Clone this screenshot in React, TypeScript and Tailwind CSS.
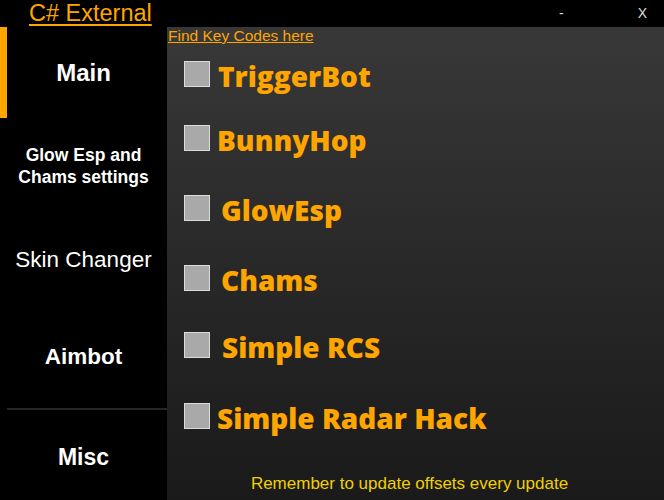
const rows = [
  { label: "TriggerBot", mt: "mt-[16px]", ml: "ml-[8px]" },
  { label: "BunnyHop", mt: "mt-[38px]", ml: "ml-[7px]" },
  { label: "GlowEsp", mt: "mt-[44px]", ml: "ml-[11px]" },
  { label: "Chams", mt: "mt-[44px]", ml: "ml-[11px]" },
  { label: "Simple RCS", mt: "mt-[41px]", ml: "ml-[12px]" },
  { label: "Simple Radar Hack", mt: "mt-[45px]", ml: "ml-[7px]" },
];

const Checkbox = () => (
  <div className="w-[26px] h-[26px] shrink-0 bg-[#a9a9a9] border border-[#dcdcdc]" />
);

export default function App() {
  return (
    <div
      className="w-[664px] h-[500px] bg-black flex flex-col overflow-hidden"
      style={{ fontFamily: '"Liberation Sans", Arial, sans-serif' }}
    >
      {/* title bar */}
      <div className="h-[27px] flex items-center shrink-0">
        <span className="ml-[29px] text-[23.5px] leading-[27px] text-[#ffa500] underline underline-offset-[3px] decoration-[2px]">
          C# External
        </span>
        <span className="ml-auto mr-[74px] text-[14px] text-[#dddddd]">-</span>
        <span className="mr-[17px] text-[14px] text-[#dddddd]">X</span>
      </div>

      <div className="flex flex-1">
        {/* sidebar */}
        <div className="w-[167px] flex flex-col text-white">
          <div className="h-[91px] flex items-center relative">
            <div className="w-[7px] h-full bg-[#ffa500]" />
            <span className="flex-1 text-center text-[24px] font-bold pr-[7px] pt-[1px]">Main</span>
          </div>
          <div className="h-[96px] flex items-center justify-center">
            <span className="text-center text-[17.5px] font-bold leading-[22px]">
              Glow Esp and
              <br />
              Chams settings
            </span>
          </div>
          <div className="h-[92px] flex items-center justify-center">
            <span className="text-[22.5px]">Skin Changer</span>
          </div>
          <div className="h-[102px] flex items-center justify-center">
            <span className="text-[22.5px] font-bold">Aimbot</span>
          </div>
          <div className="ml-[7px] h-[2px] bg-[#262626]" />
          <div className="flex-1 flex items-center justify-center pt-[4px]">
            <span className="text-[23px] font-bold">Misc</span>
          </div>
        </div>

        {/* content */}
        <div className="flex-1 flex flex-col bg-gradient-to-b from-[#383838] to-[#1a1a1a]">
          <a className="ml-[1px] text-[15.5px] leading-[18px] text-[#ffa500] underline self-start cursor-pointer">
            Find Key Codes here
          </a>
          <div className="pl-[17px] flex flex-col">
            {rows.map((r) => (
              <div key={r.label} className={`flex items-center h-[26px] ${r.mt}`}>
                <Checkbox />
                <span
                  className={`${r.ml} text-[28px] font-extrabold text-[#ffa500] leading-none pt-[3px]`}
                  style={{ fontFamily: '"Open Sans", "Noto Sans", sans-serif' }}
                >
                  {r.label}
                </span>
              </div>
            ))}
          </div>
          <div className="mt-auto mb-[4px] pr-[12px] text-center text-[17px] text-[#f0d000]">
            Remember to update offsets every update
          </div>
        </div>
      </div>
    </div>
  );
}
